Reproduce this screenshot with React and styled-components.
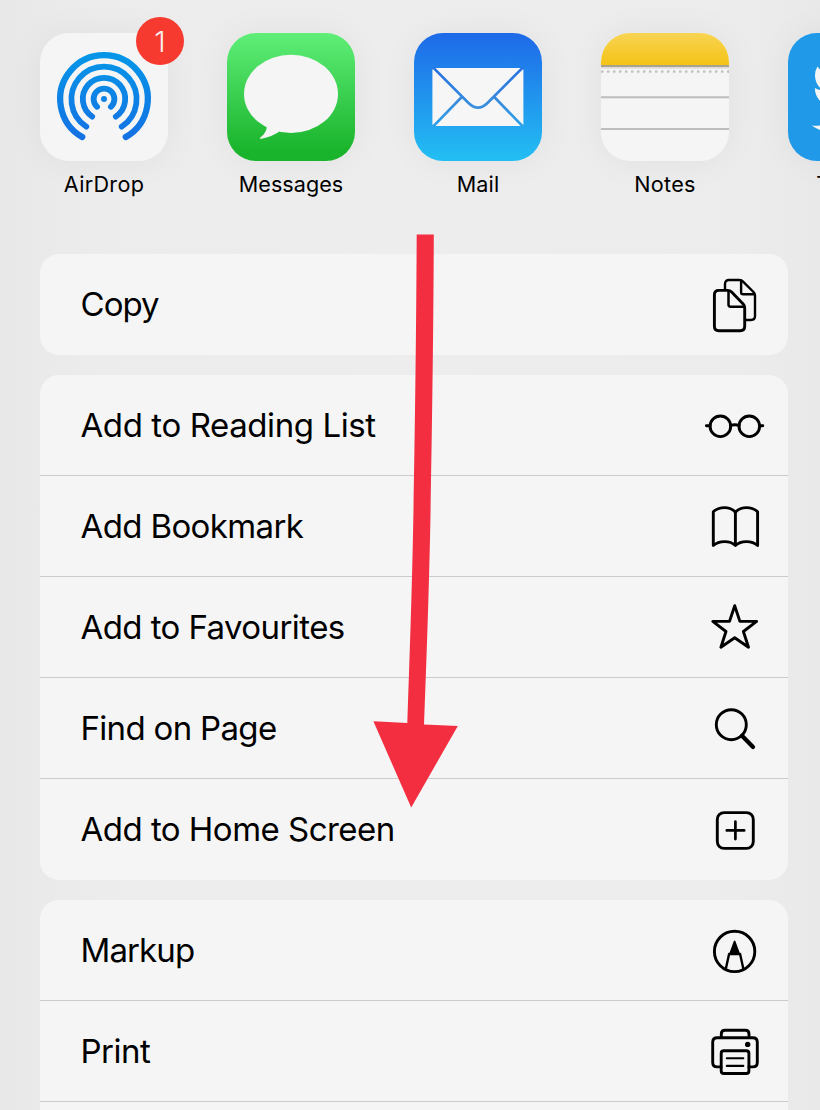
import React from "react";
import styled, { createGlobalStyle } from "styled-components";

const GlobalStyle = createGlobalStyle`
  *, *::before, *::after { box-sizing: border-box; }
  body {
    margin: 0;
    overflow: hidden;
    font-family: Inter, "Liberation Sans", sans-serif;
    color: #000;
  }
`;

const Sheet = styled.main`
  position: relative;
  width: 820px;
  height: 1110px;
  overflow: hidden;
  background: linear-gradient(90deg, #e8e8e9 0, #ececec 12%, #eeeded 50%, #ececec 90%, #e9e9ea 100%);
`;

const AppRow = styled.nav`
  display: flex;
  gap: 59px;
  height: 254px;
  padding: 33px 0 0 40px;
`;

const AppItem = styled.div`
  display: flex;
  flex: none;
  flex-direction: column;
  align-items: center;
  width: 128px;
`;

const AppIcon = styled.div`
  position: relative;
  width: 128px;
  height: 128px;
  border-radius: 29px;
  background: ${(p) => p.$fill};
  box-shadow: 0 0 36px rgba(0, 0, 0, 0.05);

  > svg {
    display: block;
    border-radius: 29px;
  }
`;

const AppLabel = styled.span`
  margin-top: 10px;
  font-size: 21.6px;
  line-height: 27px;
  letter-spacing: ${(p) => p.$tracking || "0.3px"};
  white-space: nowrap;
`;

const Badge = styled.span`
  position: absolute;
  top: -16px;
  right: -16px;
  display: grid;
  place-items: center;
  width: 48px;
  height: 48px;
  border-radius: 50%;
  background: #f63a2f;
  color: #f8eeee;
  font-size: 29px;
  font-weight: 300;
`;

const Groups = styled.div`
  display: flex;
  flex-direction: column;
  gap: 20px;
  padding: 0 32px 0 40px;
`;

const Group = styled.section`
  flex: none;
  border-radius: 19px;
  background: #f5f5f5;
  overflow: hidden;
`;

const Action = styled.div`
  display: flex;
  align-items: center;
  justify-content: space-between;
  height: 101px;
  padding: 0 21px 0 40.5px;
  border-bottom: 1px solid #cbcbcc;

  &:last-child { border-bottom-color: transparent; }
`;

const ActionLabel = styled.span`
  font-size: 33px;
  line-height: 40px;
  letter-spacing: ${(p) => p.$tracking};
  white-space: nowrap;
`;

const Glyph = styled.svg`
  flex: none;
  width: 64px;
  height: 64px;
  fill: none;
  stroke: #000;
  stroke-width: 2.9;
  stroke-linecap: round;
  stroke-linejoin: round;
`;

const Arrow = styled.svg`
  position: absolute;
  top: 234px;
  left: 373px;
  width: 86px;
  height: 575px;
  fill: #f32e41;
`;

const AirDropArt = () => (
  <svg width="128" height="128" viewBox="0 0 128 128" fill="none" strokeLinecap="round">
    <defs>
      <linearGradient id="air" gradientUnits="userSpaceOnUse" x1="0" y1="19" x2="0" y2="108">
        <stop offset="0" stopColor="#0597e8" />
        <stop offset="1" stopColor="#1570e3" />
      </linearGradient>
    </defs>
    <g stroke="url(#air)" strokeWidth="5.8">
      <path d="M42.2 104A43.8 43.8 0 1 1 85.8 104" strokeWidth="6.3" />
      <path d="M46.3 93.6A32.6 32.6 0 1 1 81.7 93.6" />
      <path d="M52.2 83.6A21.2 21.2 0 1 1 75.8 83.6" />
      <path d="M57.1 73.8A10.4 10.4 0 1 1 70.9 73.8" />
    </g>
    <circle cx="64" cy="66" r="3" fill="url(#air)" />
  </svg>
);

const MessagesArt = () => (
  <svg width="128" height="128" viewBox="0 0 128 128" fill="#f5f5f5">
    <ellipse cx="64" cy="60.9" rx="47" ry="39.2" />
    <path d="M35 87C40 90 40.5 94 39 97.5C37.5 101 35.5 103 33 104.7C32.5 105.3 33 106 34 105.8C42 104.6 47 102 52 98.8L56 90Z" />
  </svg>
);

const MailArt = () => (
  <svg width="128" height="128" viewBox="0 0 128 128" fill="none">
    <defs>
      <linearGradient id="mail" gradientUnits="userSpaceOnUse" x1="0" y1="35" x2="0" y2="93">
        <stop offset="0" stopColor="#2672e2" />
        <stop offset="0.65" stopColor="#3a8fdd" />
        <stop offset="1" stopColor="#2ba0ea" />
      </linearGradient>
    </defs>
    <rect x="18.4" y="35" width="91" height="58" rx="2.6" fill="#f6f6f6" />
    <g stroke="url(#mail)" strokeWidth="2.7">
      <path d="M19 34.4L54.5 70Q64 79.5 73.5 70L109 34.4" />
      <path d="M19 93.6L47.5 64.2M109 93.6L80.5 64.2" />
    </g>
  </svg>
);

const NotesArt = () => (
  <svg width="128" height="128" viewBox="0 0 128 128" fill="none">
    <defs>
      <linearGradient id="pad" x1="0" y1="0" x2="0" y2="1">
        <stop offset="0" stopColor="#f8d452" />
        <stop offset="1" stopColor="#f4c317" />
      </linearGradient>
    </defs>
    <rect width="128" height="32" fill="url(#pad)" />
    <path d="M0 33.1H128" stroke="#aaa28f" strokeWidth="2.2" />
    <path d="M0 34.9H128" stroke="#dddddb" strokeWidth="1.5" />
    <path d="M1.2 38.6H128" stroke="#c1c1c3" strokeWidth="2.9" strokeLinecap="round" strokeDasharray="0 6" />
    <path d="M0 64.3H128M0 96H128" stroke="#bcbdbf" strokeWidth="2" />
  </svg>
);

const TwitterArt = () => (
  <svg width="128" height="128" viewBox="0 0 128 128" fill="#f6f6f6">
    <path
      transform="translate(23.5 22.2) scale(3.6)"
      d="M23.953 4.57a10 10 0 01-2.825.775 4.958 4.958 0 002.163-2.723c-.951.555-2.005.959-3.127 1.184a4.92 4.92 0 00-8.384 4.482C7.69 8.095 4.067 6.13 1.64 3.162a4.822 4.822 0 00-.666 2.475c0 1.71.87 3.213 2.188 4.096a4.904 4.904 0 01-2.228-.616v.06a4.923 4.923 0 003.946 4.827 4.996 4.996 0 01-2.212.085 4.936 4.936 0 004.604 3.417 9.867 9.867 0 01-6.102 2.105c-.39 0-.779-.023-1.17-.067a13.995 13.995 0 007.557 2.209c9.053 0 13.998-7.496 13.998-13.985 0-.21 0-.42-.015-.63A9.935 9.935 0 0024 4.59z"
    />
  </svg>
);

const CopyGlyph = () => (
  <Glyph viewBox="0 0 64 64">
    <g strokeWidth="2.4">
      <path d="M22 17V12Q22 8 26 8H36.5Q38.4 8 39.8 9.4L50.5 20Q52 21.5 52 23.5V44Q52 48 48 48H43" />
      <path d="M38.1 8.5V20.2Q38.1 22.3 40.2 22.3H51.5" />
    </g>
    <path d="M15.8 18.4H24.5Q27 18.4 28.6 20L40.2 32Q41.7 33.6 41.7 35.8V54.3Q41.7 58.7 37.3 58.7H15.8Q11.4 58.7 11.4 54.3V22.8Q11.4 18.4 15.8 18.4Z" />
    <path d="M25.5 19V32.6Q25.5 34.7 27.6 34.7H41" strokeWidth="2.5" />
  </Glyph>
);

const GlassesGlyph = () => (
  <Glyph viewBox="0 0 64 64">
    <circle cx="17.4" cy="33.3" r="10.3" />
    <circle cx="46.3" cy="33.3" r="10.3" />
    <path d="M27.5 32.5Q31.8 30.9 36.2 32.5M3.4 32.8H7M56.7 32.8H59.8" />
  </Glyph>
);

const BookGlyph = () => (
  <Glyph viewBox="0 0 64 64">
    <path d="M32.4 18.2C27 12 16 12.4 10.3 17.8V51.5C16 46.4 27 46.2 32.4 51.5C38 46.2 49 46.4 54.6 51.5V17.8C49 12.4 38 12 32.4 18.2V51.5" />
  </Glyph>
);

const StarGlyph = () => (
  <Glyph viewBox="0 0 64 64">
    <path d="M31.7 10.7L36.9 26.4H53.6L40.4 36.5L45.5 52.2L31.7 42.7L17.9 52.2L23 36.5L9.8 26.4H26.5Z" />
  </Glyph>
);

const SearchGlyph = () => (
  <Glyph viewBox="0 0 64 64">
    <circle cx="28.3" cy="28.7" r="15" />
    <path d="M39 39.7L50 51" strokeWidth="4.2" />
  </Glyph>
);

const PlusGlyph = () => (
  <Glyph viewBox="0 0 64 64">
    <rect x="14.3" y="15.6" width="36" height="35.8" rx="6.8" />
    <path d="M23.8 33.4H41.2M32.4 24.7V42.1" strokeWidth="2.7" />
  </Glyph>
);

const MarkupGlyph = () => (
  <Glyph viewBox="0 0 64 64">
    <circle cx="31.6" cy="33.4" r="20.2" />
    <path d="M31.6 23.5L27 36H36.2Z" fill="#000" strokeWidth="1.8" />
    <path d="M22.8 51L26.1 36H37.1L40.4 51" strokeWidth="2.4" />
  </Glyph>
);

const PrintGlyph = () => (
  <Glyph viewBox="0 0 64 64">
    <path d="M18.3 18.5V15Q18.3 11.3 22 11.3H42.3Q46 11.3 46 15V18.5" />
    <path d="M18 47.9H14.2Q9.7 47.9 9.7 43.4V23.2Q9.7 18.7 14.2 18.7H49.8Q54.3 18.7 54.3 23.2V43.4Q54.3 47.9 49.8 47.9H46" />
    <rect x="18.2" y="31.7" width="27.7" height="22.8" rx="2.6" />
    <path d="M23.8 39.3H40.3M23.8 46.9H40.3" strokeWidth="2.1" />
    <circle cx="44.7" cy="25.4" r="2.7" fill="#000" stroke="none" />
  </Glyph>
);

const actionGroups = [
  [{ label: "Copy", Icon: CopyGlyph, tracking: "-0.95px" }],
  [
    { label: "Add to Reading List", Icon: GlassesGlyph, tracking: "-0.41px" },
    { label: "Add Bookmark", Icon: BookGlyph, tracking: "-0.62px" },
    { label: "Add to Favourites", Icon: StarGlyph, tracking: "-0.58px" },
    { label: "Find on Page", Icon: SearchGlyph, tracking: "-0.68px" },
    { label: "Add to Home Screen", Icon: PlusGlyph, tracking: "-0.52px" },
  ],
  [
    { label: "Markup", Icon: MarkupGlyph, tracking: "-0.9px" },
    { label: "Print", Icon: PrintGlyph, tracking: "-0.5px" },
  ],
];

export default function App() {
  return (
    <>
      <GlobalStyle />
      <Sheet>
        <AppRow>
          <AppItem>
            <AppIcon $fill="#f5f5f5">
              <AirDropArt />
              <Badge>1</Badge>
            </AppIcon>
            <AppLabel>AirDrop</AppLabel>
          </AppItem>
          <AppItem>
            <AppIcon $fill="linear-gradient(#5fee78, #1ab42c 92%)">
              <MessagesArt />
            </AppIcon>
            <AppLabel $tracking="0.02px">Messages</AppLabel>
          </AppItem>
          <AppItem>
            <AppIcon $fill="linear-gradient(#1e69e8, #23bff3)">
              <MailArt />
            </AppIcon>
            <AppLabel $tracking="0.1px">Mail</AppLabel>
          </AppItem>
          <AppItem>
            <AppIcon $fill="#f5f5f5">
              <NotesArt />
            </AppIcon>
            <AppLabel>Notes</AppLabel>
          </AppItem>
          <AppItem>
            <AppIcon $fill="#2099e8">
              <TwitterArt />
            </AppIcon>
            <AppLabel>Twitter</AppLabel>
          </AppItem>
        </AppRow>
        <Groups>
          {actionGroups.map((actions) => (
            <Group key={actions[0].label}>
              {actions.map(({ label, Icon, tracking }) => (
                <Action key={label}>
                  <ActionLabel $tracking={tracking}>{label}</ActionLabel>
                  <Icon />
                </Action>
              ))}
              {actions[0].label === "Markup" && <Action />}
            </Group>
          ))}
        </Groups>
        <Arrow viewBox="373 234 86 575">
          <path d="M416.7 234.6H433.8C433.4 340 431.8 440 430.4 520C429 590 426.5 660 424 724.6L457.8 726L411.2 807.5L373.4 721.3L407.3 723C409.5 660 412 590 413.3 520C414.8 440 416.2 340 416.7 234.6Z" />
        </Arrow>
      </Sheet>
    </>
  );
}
